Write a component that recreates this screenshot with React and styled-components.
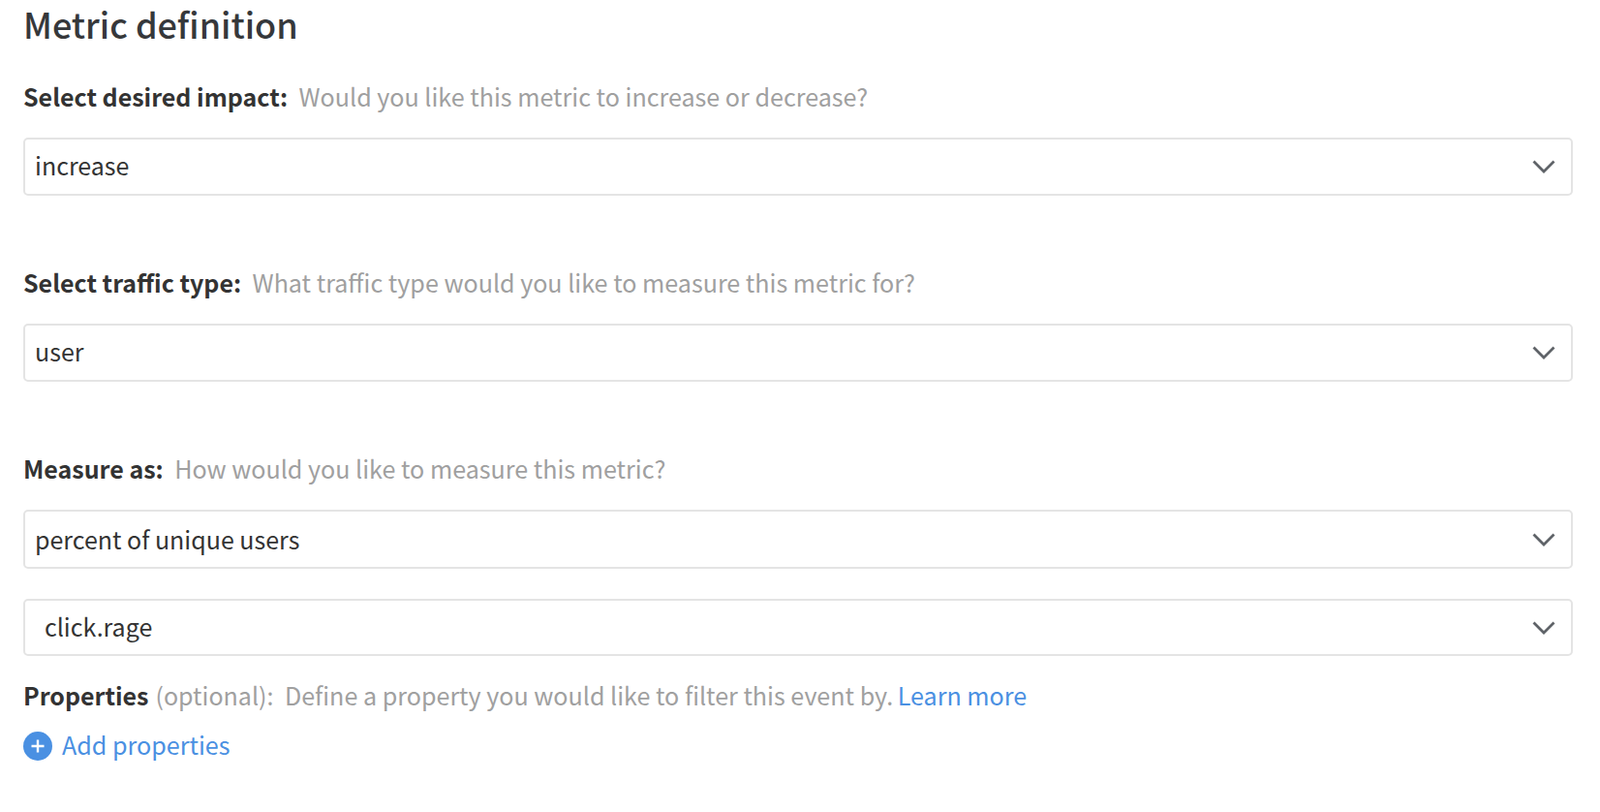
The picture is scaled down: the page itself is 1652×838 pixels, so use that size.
import React from "react";
import styled, { createGlobalStyle } from "styled-components";

const fields = [
  {
    label: "Select desired impact:",
    hint: "Would you like this metric to increase or decrease?",
    selects: [{ value: "increase", height: 60 }],
  },
  {
    label: "Select traffic type:",
    hint: "What traffic type would you like to measure this metric for?",
    selects: [{ value: "user", height: 60 }],
  },
  {
    label: "Measure as:",
    hint: "How would you like to measure this metric?",
    selects: [
      { value: "percent of unique users", height: 61, textLift: 1 },
      { value: "click.rage", height: 59, textLift: 3, inset: true },
    ],
  },
];

const Chevron = () => (
  <ChevronIcon viewBox="0 0 24 14" fill="none">
    <path d="M1.5 1.5 L12 12 L22.5 1.5" stroke="#5f6368" strokeWidth="2.8" />
  </ChevronIcon>
);

const App = () => {
  return (
    <Page>
      <GlobalStyle />
      <Title>Metric definition</Title>
      {fields.map(field => (
        <Field key={field.label}>
          <Label>
            <strong>{field.label}</strong>
            <Hint>{field.hint}</Hint>
          </Label>
          <Selects>
            {field.selects.map(select => (
              <Select key={select.value} $inset={select.inset} $height={select.height}>
                <SelectText $lift={select.textLift ?? 5}>{select.value}</SelectText>
                <Chevron />
              </Select>
            ))}
          </Selects>
        </Field>
      ))}
      <Properties>
        <strong>Properties</strong>
        <Optional>(optional):</Optional>
        <Hint>Define a property you would like to filter this event by.</Hint>{" "}
        <LearnMore>Learn more</LearnMore>
      </Properties>
      <AddRow>
        <PlusIcon viewBox="0 0 30 30">
          <circle cx="15" cy="15" r="15" fill="#4a90e2" />
          <path d="M15 8.5 V21.5 M8.5 15 H21.5" stroke="#fff" strokeWidth="2.4" />
        </PlusIcon>
        <AddLink>Add properties</AddLink>
      </AddRow>
    </Page>
  );
};

export default App;

const GlobalStyle = createGlobalStyle`
  body {
    margin: 0;
    background: #fff;
    font-family: "Noto Sans CJK SC", "Open Sans", sans-serif;
  }
`;

const Page = styled.div`
  padding: 0 28px 0 24px;
  color: #333;
  font-size: 25px;
  line-height: 36px;
`;

const Title = styled.h1`
  margin: 0;
  padding-top: 1px;
  height: 80px;
  font-size: 36px;
  line-height: 46px;
  font-weight: 500;
  color: #36383b;
`;

const Field = styled.section`
  margin-bottom: 71px;
  &:nth-of-type(3) {
    margin-bottom: 22px;
  }
`;

const Label = styled.div`
  margin-bottom: 25px;
  strong {
    font-weight: 700;
  }
`;

const Hint = styled.span`
  margin-left: 11.5px;
  font-size: 25.1px;
  color: #a0a0a0;
`;

const Selects = styled.div`
  display: flex;
  flex-direction: column;
  gap: 31px;
`;

const Select = styled.div`
  display: flex;
  align-items: center;
  justify-content: space-between;
  box-sizing: border-box;
  height: ${props => props.$height}px;
  padding: 0 16px 0 ${props => (props.$inset ? "20px" : "10px")};
  border: 2px solid #e4e4e4;
  border-radius: 5px;
  color: #333;
`;

const SelectText = styled.span`
  padding-bottom: ${props => props.$lift}px;
`;

const ChevronIcon = styled.svg`
  width: 24px;
  height: 14px;
`;

const Properties = styled.div`
  strong {
    font-weight: 700;
  }
`;

const Optional = styled.span`
  margin-left: 7px;
  color: #a0a0a0;
`;

const Link = styled.a`
  font-size: 25.1px;
  color: #4a90e2;
`;

const LearnMore = styled(Link)`
  margin-left: -1px;
`;

const AddRow = styled.div`
  display: flex;
  align-items: center;
  gap: 10px;
  margin-top: 15px;
`;

const AddLink = styled(Link)`
  padding-bottom: 3px;
`;

const PlusIcon = styled.svg`
  width: 30px;
  height: 30px;
`;
